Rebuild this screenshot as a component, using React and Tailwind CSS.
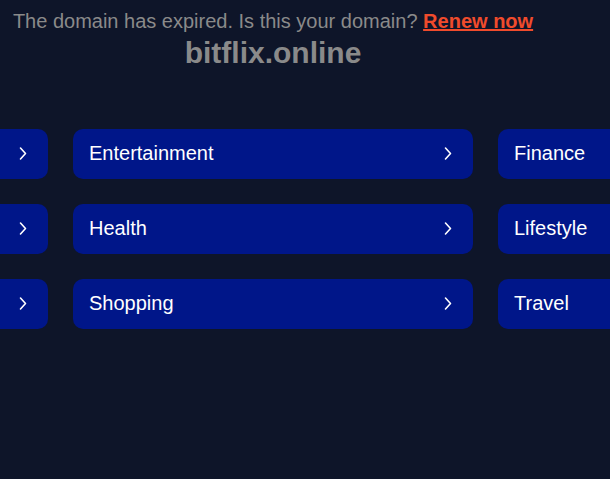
const rows = [
  ["Arts", "Entertainment", "Finance"],
  ["Games", "Health", "Lifestyle"],
  ["Science", "Shopping", "Travel"],
];

const Chevron = () => (
  <svg width="10" height="15" viewBox="0 0 10 15" fill="none" stroke="white" strokeWidth="1.6" strokeLinecap="round" strokeLinejoin="round">
    <path d="M2.5 2 L7.5 7.5 L2.5 13" />
  </svg>
);

export default function App() {
  return (
    <div className="min-h-[479px] w-[610px] overflow-hidden bg-[#0e1529] font-['Liberation_Sans',Arial,sans-serif]">
      <div className="w-[546px] flex flex-col items-center">
        <p className="pt-[9px] text-[20px] leading-[24px] text-[#8a8a8a] whitespace-nowrap">
          The domain has expired. Is this your domain?{" "}
          <a href="#" className="font-bold text-[#f04b2c] underline">Renew now</a>
        </p>
        <h1 className="mt-[3px] text-[30px] leading-[34px] font-bold text-[#8a8a8a]">bitflix.online</h1>
        <div className="mt-[59px] grid grid-cols-[400px_400px_400px] gap-[25px] justify-center w-[1250px]">
          {rows.flat().map((label, i) => (
            <a
              key={i}
              href="#"
              className="h-[50px] rounded-[10px] bg-[#001689] flex items-center justify-between pl-4 pr-[20px] pb-[2px] text-white text-[20px]"
            >
              <span>{label}</span>
              <Chevron />
            </a>
          ))}
        </div>
      </div>
    </div>
  );
}
